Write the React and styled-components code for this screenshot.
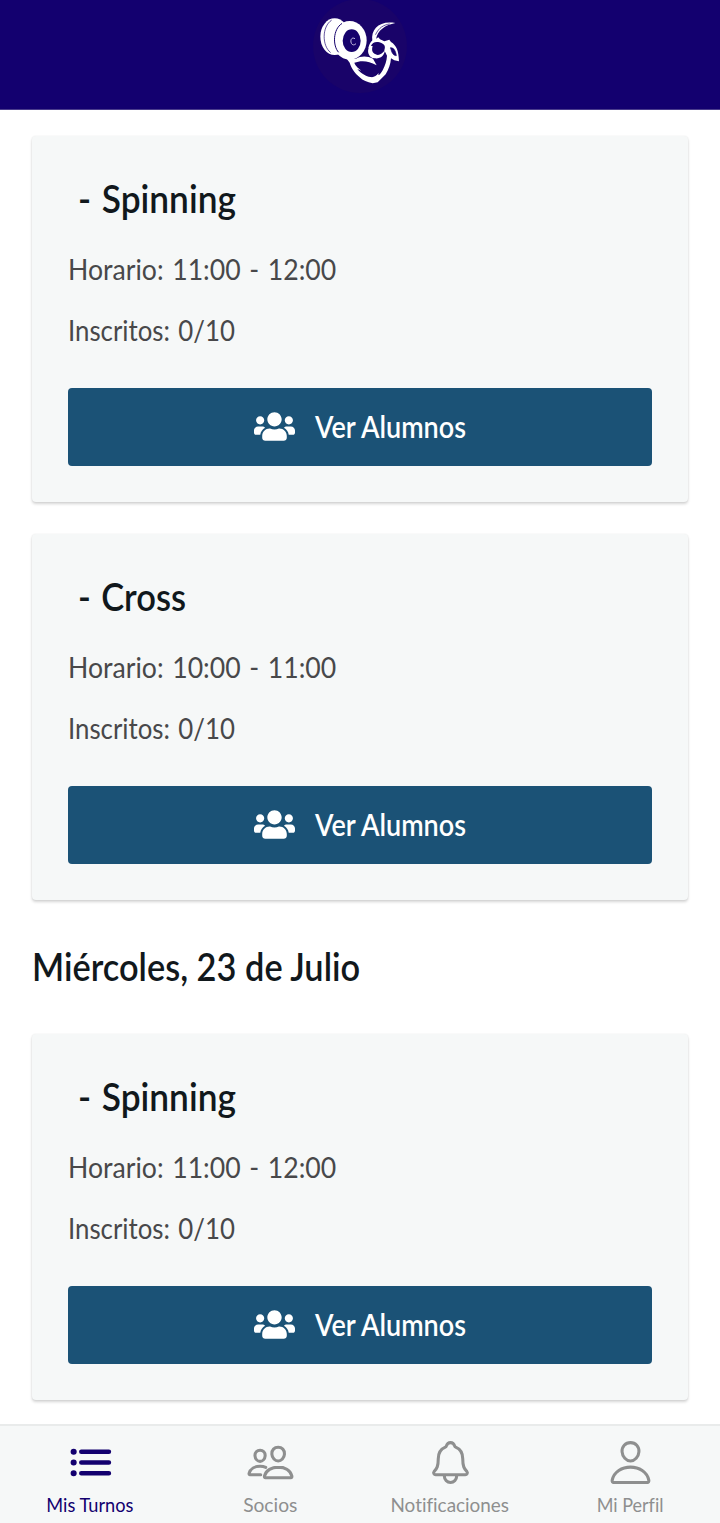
import React from "react";
import styled, { createGlobalStyle } from "styled-components";
import { FaUsers } from "react-icons/fa";
import { IoList, IoPeopleOutline, IoNotificationsOutline, IoPersonOutline } from "react-icons/io5";

const GlobalStyle = createGlobalStyle`
  * { box-sizing: border-box; }
  body {
    margin: 0;
    background: #fff;
    font-family: Lato, "Liberation Sans", sans-serif;
    font-variant-ligatures: none;
  }
`;

const Screen = styled.div`
  display: flex;
  flex-direction: column;
  width: 720px;
  height: 1523px;
  overflow: hidden;
`;

const Header = styled.header`
  flex: none;
  display: flex;
  justify-content: center;
  height: 110px;
  background: #13006f;
  border-bottom: 1px solid #4a3c8c;
`;

const Content = styled.main`
  flex: 1;
  min-height: 0;
  padding: 26px 32px 0;
`;

const Card = styled.section`
  height: 366px;
  margin-bottom: 32px;
  padding: 34px 36px;
  border-radius: 4px;
  background: #f6f8f8;
  box-shadow: 0 2px 3px rgba(0, 0, 0, 0.17), 0 0 2px rgba(0, 0, 0, 0.07);
`;

const Label = styled.span`
  display: inline-block;
  white-space: pre;
  transform: scaleX(${(p) => p.$stretch || 1});
  transform-origin: ${(p) => p.$origin || "left"} center;
`;

const CardTitle = styled.h2`
  margin: 0;
  padding-left: 10px;
  font-size: 39px;
  line-height: 56px;
  font-weight: 600;
  word-spacing: 2px;
  color: #11181c;
`;

const Detail = styled.p`
  margin: 0;
  padding-top: ${(p) => p.$gap}px;
  font-size: 29px;
  line-height: 40px;
  word-spacing: 2px;
  color: #48484a;
`;

const Button = styled.button`
  display: flex;
  align-items: center;
  justify-content: flex-start;
  width: 100%;
  height: 78px;
  margin-top: 38px;
  padding: 0 0 2px 186px;
  gap: 20px;
  border: 0;
  border-radius: 4px;
  background: #1b5276;
  color: #fff;
  font: 600 30px/38px Lato, sans-serif;
  svg { width: 41px; height: 33px; }
`;

const DayHeading = styled.h1`
  margin: 0;
  height: 102px;
  font-size: 39px;
  line-height: 68px;
  font-weight: 600;
  color: #11181c;
`;

const TabBar = styled.nav`
  flex: none;
  display: grid;
  grid-template-columns: repeat(4, 1fr);
  height: 99px;
  border-top: 2px solid #e9ebeb;
  background: #f6f8f8;
`;

const Tab = styled.a`
  display: flex;
  flex-direction: column;
  align-items: center;
  padding-top: 12px;
  font-size: 20px;
  line-height: 30px;
  color: ${(p) => (p.$active ? "#13006f" : "#8e8f8f")};
  svg { width: 49px; height: 49px; margin-bottom: 2px; }
`;

function Logo() {
  return (
    <svg width="120" height="109" viewBox="0 0 360 327">
      <circle cx="180" cy="138" r="141" fill="#190369" />
      <g fill="#fff">
        <ellipse cx="104" cy="110" rx="43" ry="55" />
        <ellipse cx="149" cy="121" rx="51" ry="58" />
        <path d="M139 175 L168 176 C183 167 202 167 219 176 L230 196 C211 186 196 182 181 184 L163 188 C166 198 178 207 184 212 L172 207 C184 221 199 230 211 231 C222 233 228 228 236 219 C233 229 239 227 248 211 C256 195 260 182 261 167 L253 151 C258 137 252 131 238 127 C226 124 217 128 212 139 L205 145 C208 129 216 118 228 116 L235 112 L240 118 L253 124 L268 119 L273 126 C289 136 296 151 297 184 L283 181 L273 175 C272 192 266 208 257 223 L233 247 L218 250 C201 247 189 242 179 232 C163 217 155 207 149 188 Z" />
        <path d="M217 123 C212 86 239 61 286 69 C256 75 233 90 228 118 Z" />
        <path d="M209 137 C199 153 205 173 224 175 C241 177 253 168 255 150 C247 162 236 168 227 163 C217 159 214 151 218 138 Z" />
      </g>
      <ellipse cx="155" cy="122" rx="27" ry="34" fill="#16026c" />
      <g fill="none" stroke="#16026c" strokeLinecap="round">
        <path d="M94 61 C65 80 66 138 91 157" strokeWidth="2" />
        <path d="M125 71 C98 88 98 138 115 156" strokeWidth="3" />
        <path d="M227 103 C237 82 251 75 268 72" strokeWidth="2" />
        <path d="M272 144 C280 141 287 152 289 167 C281 167 275 160 272 144 Z" fill="#16026c" strokeWidth="2" />
      </g>
      <path d="M165 116 C155 110 150 120 154 130 C157 136 163 136 168 131" fill="none" stroke="#c4bbe0" strokeWidth="3" />
    </svg>
  );
}

function ClassCard({ name, time, stretch }) {
  return (
    <Card>
      <CardTitle><Label $stretch={stretch}>{"- " + name}</Label></CardTitle>
      <Detail $gap={23}><Label $stretch={0.918}>Horario: {time}</Label></Detail>
      <Detail $gap={21}><Label $stretch={0.89}>Inscritos: 0/10</Label></Detail>
      <Button><FaUsers /><Label $stretch={0.9}>Ver Alumnos</Label></Button>
    </Card>
  );
}

const tabs = [
  { label: "Mis Turnos", icon: IoList, active: true, stretch: 0.91 },
  { label: "Socios", icon: IoPeopleOutline, stretch: 0.96 },
  { label: "Notificaciones", icon: IoNotificationsOutline, stretch: 0.945 },
  { label: "Mi Perfil", icon: IoPersonOutline, stretch: 0.9 },
];

export default function App() {
  return (
    <Screen>
      <GlobalStyle />
      <Header><Logo /></Header>
      <Content>
        <ClassCard name="Spinning" time="11:00 - 12:00" stretch={0.905} />
        <ClassCard name="Cross" time="10:00 - 11:00" stretch={0.885} />
        <DayHeading><Label $stretch={0.881}>Miércoles, 23 de Julio</Label></DayHeading>
        <ClassCard name="Spinning" time="11:00 - 12:00" stretch={0.905} />
      </Content>
      <TabBar>
        {tabs.map(({ label, icon: Icon, active, stretch }) => (
          <Tab key={label} $active={active}>
            <Icon />
            <Label $stretch={stretch} $origin="center">{label}</Label>
          </Tab>
        ))}
      </TabBar>
    </Screen>
  );
}
